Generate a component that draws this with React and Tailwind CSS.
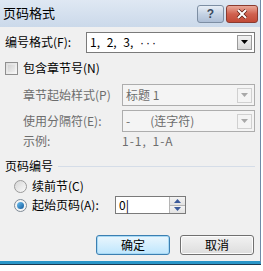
import React from "react";

const font = { fontFamily: '"SimSun","Noto Sans CJK SC","Liberation Sans",sans-serif' };

function DropBtn({ disabled }) {
  return (
    <div className={`w-[15px] h-[15px] mr-[2px] flex items-center justify-center border ${disabled ? "border-[#d0d0d0] bg-[#f4f4f4]" : "border-[#9a9a9a] bg-gradient-to-b from-[#f2f2f2] to-[#d8d8d8]"}`}>
      <svg width="7" height="4" viewBox="0 0 7 4">
        <path d="M0 0h7L3.5 4z" fill={disabled ? "#a8a8a8" : "#000"} />
      </svg>
    </div>
  );
}

export default function App() {
  return (
    <div className="w-[263px] h-[271px] bg-white overflow-hidden text-[12px] text-black" style={font}>
      <div className="w-[261px] h-[264px] flex flex-col border-r border-b-[3px] border-r-[#6f8aa8] border-b-[#2a96c8] bg-[#f0f0f0] shadow-[0_1px_0_#1c3b52]">
        {/* title bar */}
        <div className="h-[27px] flex items-start bg-gradient-to-b from-[#dfe8f3] to-[#cbd9ea] shrink-0">
          <div className="pl-[3px] pt-[5px] text-[13px] leading-[16px] text-black">页码格式</div>
          <div className="ml-auto flex gap-[2px] pt-[5px] pr-[2px]">
            <div className="w-[27px] h-[18px] rounded-[3px] border border-[#7d8ea3] bg-gradient-to-b from-[#e8eef6] via-[#c5d3e4] to-[#aebfd6] flex items-center justify-center text-[12px] font-bold text-[#3a4a5e] leading-none" style={{ fontFamily: '"Liberation Sans",sans-serif' }}>?</div>
            <div className="w-[32px] h-[18px] rounded-[3px] border border-[#8a3b30] bg-gradient-to-b from-[#e9a99b] via-[#d0614f] to-[#c24a37] flex items-center justify-center">
              <svg width="12" height="10" viewBox="0 0 12 10">
                <path d="M2 1l8 8M10 1l-8 8" stroke="#5a1a10" strokeWidth="3.4" />
                <path d="M2 1l8 8M10 1l-8 8" stroke="#fff" strokeWidth="2" />
              </svg>
            </div>
          </div>
        </div>

        {/* content */}
        <div className="flex flex-col pl-[5px] pr-[5px]">
          {/* 编号格式 */}
          <div className="flex items-center mt-[4px] h-[22px]">
            <div className="w-[81px]">编号格式(F):</div>
            <div className="flex-1 h-[21px] bg-white border border-[#7a7a7a] flex items-center justify-between">
              <span className="pl-[3px] [word-spacing:4px]">1, 2, 3, <span className="tracking-[2px]" style={{ fontFamily: '"Liberation Sans",sans-serif' }}>···</span></span>
              <DropBtn />
            </div>
          </div>

          {/* checkbox */}
          <div className="flex items-center mt-[7px] h-[16px]">
            <div className="w-[13px] h-[13px] border border-[#8f8f8f] bg-gradient-to-br from-[#dcdcdc] to-[#f8f8f8] p-[2px]">
              <div className="w-full h-full bg-gradient-to-br from-[#d2d2d2] to-[#efefef]" />
            </div>
            <span className="ml-[5px]">包含章节号(N)</span>
          </div>

          {/* 章节起始样式 */}
          <div className="flex items-center mt-[8px] h-[22px] pl-[18px] text-[#6d6d6d]">
            <div className="w-[99px]">章节起始样式(P)</div>
            <div className="flex-1 h-[22px] bg-[#f4f4f4] border border-[#adadad] flex items-center justify-between">
              <span className="pl-[3px]">标题 1</span>
              <DropBtn disabled />
            </div>
          </div>

          {/* 使用分隔符 */}
          <div className="flex items-center mt-[4px] h-[22px] pl-[18px] text-[#6d6d6d]">
            <div className="w-[99px]">使用分隔符(E):</div>
            <div className="flex-1 h-[22px] bg-[#f4f4f4] border border-[#adadad] flex items-center justify-between">
              <span className="pl-[3px]">-<span className="ml-[20px]">(连字符)</span></span>
              <DropBtn disabled />
            </div>
          </div>

          {/* 示例 */}
          <div className="flex items-center mt-[3px] h-[12px] pl-[18px] text-[#6d6d6d]">
            <div className="w-[99px]">示例:</div>
            <span className="tracking-[1px] [word-spacing:2px]">1-1, 1-A</span>
          </div>

          {/* 页码编号 */}
          <div className="flex items-center mt-[11px] h-[16px]">
            <span>页码编号</span>
            <div className="flex-1 ml-[5px] border-t border-[#d5dde8]" />
          </div>

          {/* radio 1 */}
          <div className="flex items-center mt-[3px] h-[18px] pl-[9px]">
            <div className="w-[13px] h-[13px] rounded-full border border-[#9a9a9a] bg-gradient-to-br from-[#d6d6d6] to-[#fafafa]" />
            <span className="ml-[5px]">续前节(C)</span>
          </div>

          {/* radio 2 */}
          <div className="flex items-center mt-[1px] h-[18px] pl-[9px]">
            <div className="w-[13px] h-[13px] rounded-full border border-[#7f8a96] bg-[#f4f4f4] flex items-center justify-center">
              <div className="w-[7px] h-[7px] rounded-full bg-gradient-to-br from-[#6fc3f3] to-[#0d5a9c]" />
            </div>
            <span className="ml-[5px] w-[83px]">起始页码(A):</span>
            <div className="w-[71px] h-[18px] bg-white border border-[#7a7a7a] flex items-center">
              <span className="pl-[3px] flex-1">0|</span>
              <div className="w-[16px] h-[16px] flex flex-col border-l border-[#b5b5b5]">
                <div className="flex-1 flex items-center justify-center bg-gradient-to-b from-[#f4f4f4] to-[#e2e2e2] border-b border-[#b5b5b5]">
                  <svg width="7" height="4" viewBox="0 0 7 4"><path d="M3.5 0L7 4H0z" fill="#3b5a9a" /></svg>
                </div>
                <div className="flex-1 flex items-center justify-center bg-gradient-to-b from-[#f4f4f4] to-[#e2e2e2]">
                  <svg width="7" height="4" viewBox="0 0 7 4"><path d="M0 0h7L3.5 4z" fill="#3b5a9a" /></svg>
                </div>
              </div>
            </div>
          </div>

          {/* buttons */}
          <div className="flex justify-end gap-[10px] mt-[21px] pr-[1px]">
            <div className="w-[74px] h-[20px] rounded-[3px] border border-[#3c7fb1] bg-gradient-to-b from-[#eaf6fd] to-[#bee6fd] flex items-center justify-center shadow-[inset_0_0_0_1px_#a7d9f5]">确定</div>
            <div className="w-[74px] h-[20px] rounded-[3px] border border-[#707070] bg-gradient-to-b from-[#f2f2f2] to-[#dddddd] flex items-center justify-center shadow-[inset_0_0_0_1px_#fcfcfc]">取消</div>
          </div>
        </div>
      </div>
    </div>
  );
}
